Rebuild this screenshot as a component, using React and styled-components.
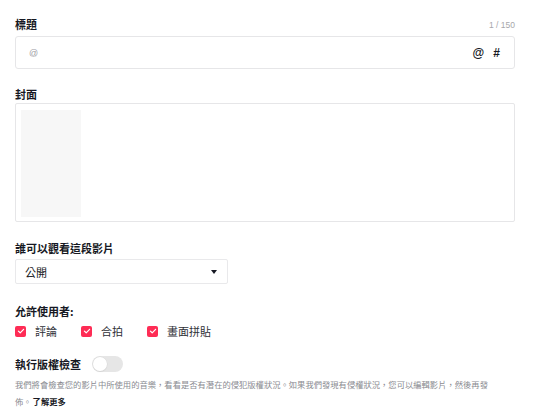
import React, { useState } from "react";
import styled, { createGlobalStyle } from "styled-components";

const GlobalStyle = createGlobalStyle`
  html, body {
    margin: 0;
    padding: 0;
    background: #fff;
  }
  body {
    font-family: "Liberation Sans", "Noto Sans CJK TC", sans-serif;
    color: #161823;
  }
`;

const Page = styled.div`
  width: 500px;
  padding: 18px 0 0 15px;
  display: flex;
  flex-direction: column;
`;

const LabelRow = styled.div`
  display: flex;
  justify-content: space-between;
  align-items: center;
  height: 13px;
  margin-top: ${(p) => p.$top || 0}px;
`;

const Label = styled.div`
  font-family: "Noto Sans CJK TC", sans-serif;
  font-size: 11px;
  font-weight: 700;
  line-height: 13px;
  color: #161823;
`;

const Counter = styled.span`
  font-family: "Liberation Sans", sans-serif;
  font-size: 8.5px;
  color: #a7a7ab;
`;

const InputBox = styled.div`
  margin-top: 5px;
  height: 33px;
  box-sizing: border-box;
  border: 1px solid #e6e6e8;
  border-radius: 3px;
  display: flex;
  align-items: center;
  padding: 0 14px 0 13px;
`;

const Placeholder = styled.span`
  flex: 1;
  font-size: 9px;
  color: #a0a0a6;
`;

const InputTool = styled.span`
  font-family: "Liberation Sans", sans-serif;
  font-size: 12px;
  font-weight: 700;
  color: #161823;
  margin-left: ${(p) => p.$gap || 0}px;
`;

const CoverBox = styled.div`
  margin-top: 2px;
  height: 119px;
  box-sizing: border-box;
  border: 1px solid #e6e6e8;
  border-radius: 2px;
  padding: 6px 5px;
  display: flex;
`;

const CoverThumb = styled.div`
  width: 60px;
  height: 107px;
  background: #f7f7f7;
`;

const Select = styled.div`
  margin-top: 4px;
  width: 213px;
  height: 25px;
  box-sizing: border-box;
  border: 1px solid #e9e9eb;
  border-radius: 2px;
  display: flex;
  align-items: center;
  justify-content: space-between;
  padding: 0 10px 0 9px;
  font-family: "Noto Sans CJK TC", sans-serif;
  font-size: 11px;
  color: #161823;
`;

const Caret = styled.span`
  width: 0;
  height: 0;
  border-left: 3.5px solid transparent;
  border-right: 3.5px solid transparent;
  border-top: 4px solid #161823;
`;

const CheckRow = styled.div`
  margin-top: 7px;
  display: flex;
  align-items: center;
  gap: 24px;
  height: 12px;
`;

const CheckItem = styled.label`
  display: flex;
  align-items: center;
  gap: 9px;
  font-family: "Noto Sans CJK TC", sans-serif;
  font-size: 11px;
  color: #2f3037;
`;

const Box = styled.span`
  width: 11px;
  height: 11px;
  border-radius: 2px;
  background: #fe2c55;
  display: flex;
  align-items: center;
  justify-content: center;
`;

const ToggleRow = styled.div`
  margin-top: 19px;
  display: flex;
  align-items: center;
  gap: 11px;
  height: 16px;
`;

const Toggle = styled.span`
  width: 31px;
  height: 16px;
  border-radius: 8px;
  background: #e6e6e6;
  display: flex;
  align-items: center;
  padding: 0 1px;
  box-sizing: border-box;
`;

const Knob = styled.span`
  width: 14px;
  height: 14px;
  border-radius: 50%;
  background: #fff;
  box-shadow: 0 0 0 0.5px #d8d8d8, 0 1px 1px rgba(0, 0, 0, 0.08);
`;

const Desc = styled.div`
  margin-top: 4px;
  display: flex;
  flex-direction: column;
  font-family: "Noto Sans CJK TC", sans-serif;
  font-size: 8.3px;
  line-height: 17px;
  color: #8a8b91;
`;

const DescLine = styled.div`
  white-space: nowrap;
`;

const More = styled.b`
  color: #161823;
  font-weight: 700;
  margin-left: 1px;
`;

const Check = () => (
  <svg width="8" height="8" viewBox="0 0 8 8">
    <path d="M1.4 4.1 L3.2 5.8 L6.6 2.3" fill="none" stroke="#fff" strokeWidth="1.2" strokeLinecap="round" strokeLinejoin="round" />
  </svg>
);

const perms = ["評論", "合拍", "畫面拼貼"];

export default function App() {
  const [checked] = useState(perms);
  return (
    <>
      <GlobalStyle />
      <Page>
        <LabelRow>
          <Label>標題</Label>
          <Counter>1 / 150</Counter>
        </LabelRow>
        <InputBox>
          <Placeholder>@</Placeholder>
          <InputTool>@</InputTool>
          <InputTool $gap={9}>#</InputTool>
        </InputBox>

        <LabelRow $top={19}>
          <Label>封面</Label>
        </LabelRow>
        <CoverBox>
          <CoverThumb />
        </CoverBox>

        <LabelRow $top={20}>
          <Label>誰可以觀看這段影片</Label>
        </LabelRow>
        <Select>
          <span>公開</span>
          <Caret />
        </Select>

        <LabelRow $top={21}>
          <Label>允許使用者:</Label>
        </LabelRow>
        <CheckRow>
          {checked.map((p) => (
            <CheckItem key={p}>
              <Box>
                <Check />
              </Box>
              {p}
            </CheckItem>
          ))}
        </CheckRow>

        <ToggleRow>
          <Label>執行版權檢查</Label>
          <Toggle>
            <Knob />
          </Toggle>
        </ToggleRow>
        <Desc>
          <DescLine>我們將會檢查您的影片中所使用的音樂，看看是否有潛在的侵犯版權狀況。如果我們發現有侵權狀況，您可以編輯影片，然後再發</DescLine>
          <DescLine>
            佈。<More>了解更多</More>
          </DescLine>
        </Desc>
      </Page>
    </>
  );
}
